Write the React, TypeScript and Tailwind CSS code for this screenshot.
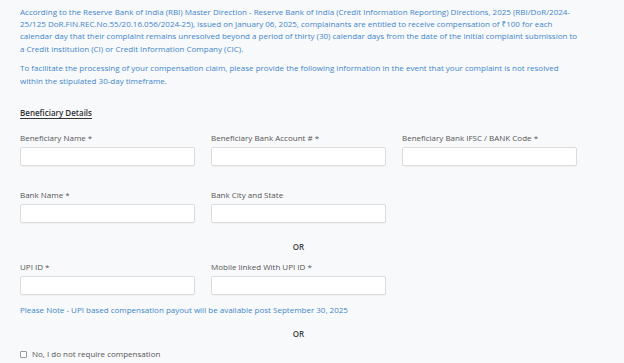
import { useState } from 'react'

const blue = 'text-[#3f86c9]'

function Field({ label }: { label: string }) {
  return (
    <div className="flex flex-col">
      <label className="text-[8px] leading-[12px] text-[#555]">{label}</label>
      <input
        type="text"
        className="mt-[3px] h-[19px] w-[175px] rounded-[2px] border border-[#dcdcdc] bg-white shadow-[0_1px_1px_rgba(0,0,0,0.04)] outline-none"
      />
    </div>
  )
}

export default function App() {
  const [noComp, setNoComp] = useState(false)

  return (
    <div
      className="min-h-screen bg-[#f8f9fb] px-[20px] pt-[6px] text-[8px]"
      style={{ fontFamily: '"Open Sans", "Noto Sans", sans-serif' }}
    >
      <p className={`w-[560px] leading-[12.2px] ${blue}`}>
        According to the Reserve Bank of India (RBI) Master Direction - Reserve Bank of India
        (Credit Information Reporting) Directions, 2025 (RBI/DoR/2024-25/125
        DoR.FIN.REC.No.55/20.16.056/2024-25), issued on January 06, 2025, complainants are
        entitled to receive compensation of ₹100 for each calendar day that their complaint
        remains unresolved beyond a period of thirty (30) calendar days from the date of the
        initial complaint submission to a Credit institution (CI) or Credit Information Company
        (CIC).
      </p>
      <p className={`mt-[7.5px] w-[560px] leading-[12.2px] ${blue}`}>
        To facilitate the processing of your compensation claim, please provide the following
        information in the event that your complaint is not resolved within the stipulated
        30-day timeframe.
      </p>

      <h3 className="mt-[20.5px] text-[8px] font-semibold leading-[12px] text-[#333] underline underline-offset-2">
        Beneficiary Details
      </h3>

      <div className="mt-[13px] grid w-[557px] grid-cols-3 gap-x-[16px]">
        <Field label="Beneficiary Name *" />
        <Field label="Beneficiary Bank Account # *" />
        <Field label="Beneficiary Bank IFSC / BANK Code *" />
      </div>

      <div className="mt-[23px] grid w-[557px] grid-cols-3 gap-x-[16px]">
        <Field label="Bank Name *" />
        <Field label="Bank City and State" />
      </div>

      <div className="mt-[18px] w-[557px] text-center font-semibold leading-[12px] text-[#444]">OR</div>

      <div className="mt-[8px] grid w-[557px] grid-cols-3 gap-x-[16px]">
        <Field label="UPI ID *" />
        <Field label="Mobile linked With UPI ID *" />
      </div>

      <p className={`mt-[9px] leading-[12px] ${blue}`}>
        Please Note - UPI based compensation payout will be available post September 30, 2025
      </p>

      <div className="mt-[12px] w-[557px] text-center font-semibold leading-[12px] text-[#444]">OR</div>

      <label className="mt-[8px] flex items-center gap-[5px] leading-[12px] text-[#555]">
        <input
          type="checkbox"
          checked={noComp}
          onChange={(e) => setNoComp(e.target.checked)}
          className="h-[7px] w-[7px] appearance-none rounded-[1px] border border-[#999] bg-white"
        />
        No, I do not require compensation
      </label>
    </div>
  )
}
